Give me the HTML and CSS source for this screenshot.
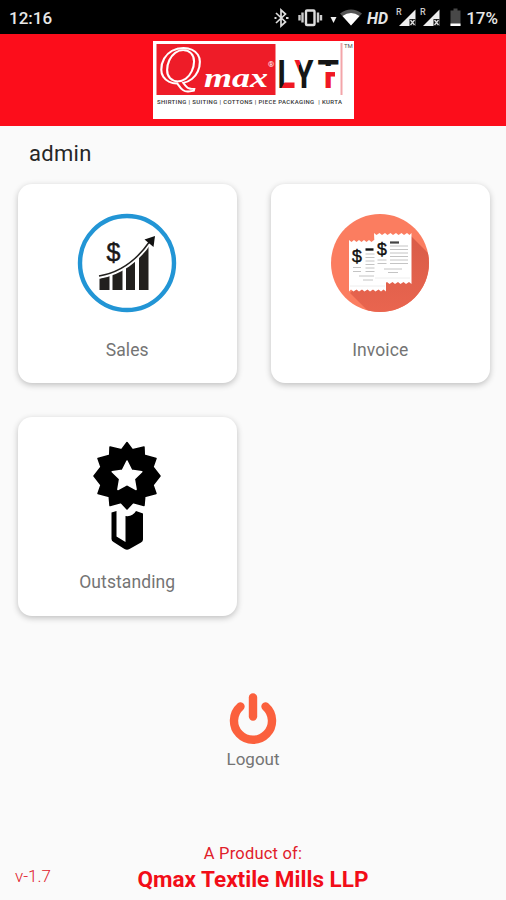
FILE: index.html
```html
<!DOCTYPE html>
<html lang="en">
  <head>
    <meta charset="UTF-8" />
    <meta name="viewport" content="width=device-width, initial-scale=1.0" />
    <title>Qmax LYF</title>
    <link rel="stylesheet" href="styles.css">
  </head>

  <body>
    <div class="app">
      <div class="status-bar">
        <span class="clock">12:16</span>
        <svg class="status-icons" width="194" height="34" viewBox="272 0 194 34">
          <!-- bluetooth -->
          <path d="M276 13l9.500 9-4.500 4V10l4.500 4-9.500 9" fill="none" stroke="#ddd" stroke-width="1.700" />
          <path d="M274.500 18h2M286 18h2.500" stroke="#ddd" stroke-width="2" />
          <!-- vibrate -->
          <rect x="306" y="10.500" width="8.500" height="14.500" rx="1" fill="none" stroke="#ddd" stroke-width="2.400" />
          <path d="M302.500 12.500v10M318 12.500v10M299.500 15v5.500M321 15v5.500" stroke="#ccc" stroke-width="2.400" />
          <!-- wifi -->
          <path d="M330.500 17h6l-3 6z" fill="#eee" />
          <path d="M340 13.500q11-8 22 0L351 25.500z" fill="#555" />
          <path d="M342.500 16q8.500-6 17 0L351 25.500z" fill="#fff" />
          <text class="hd" x="367" y="23.500" textLength="21">HD</text>
          <!-- signals -->
          <text class="roaming" x="396" y="15">R</text>
          <path d="M399 26L415.500 9.500V26z" fill="#eee" />
          <path d="M409.500 26v-7h6v7z" fill="#111" />
          <path d="M410.500 20l4 5M414.500 20l-4 5" stroke="#ddd" stroke-width="1.300" />
          <text class="roaming" x="420" y="15">R</text>
          <path d="M423 26L439.500 9.500V26z" fill="#eee" />
          <path d="M433.500 26v-7h6v7z" fill="#111" />
          <path d="M434.500 20l4 5M438.500 20l-4 5" stroke="#ddd" stroke-width="1.300" />
          <!-- battery -->
          <path d="M450.500 10.500h3V8.500h4v2h3V26h-10z" fill="#484848" />
          <path d="M450.500 23.500h10V26h-10z" fill="#fff" />
        </svg>
        <span class="battery">17%</span>
      </div>

      <header class="header">
        <svg width="201" height="85" viewBox="0 -7 201 85">
          <defs>
            <linearGradient id="y-fill" x1="0" y1="0" x2="1" y2="0.500">
              <stop offset="0.320" stop-color="#f01824" />
              <stop offset="0.320" stop-color="#151515" />
            </linearGradient>
            <linearGradient id="t-fill" x1="0" y1="0" x2="0" y2="1">
              <stop offset="0.310" stop-color="#151515" />
              <stop offset="0.310" stop-color="#fff" />
              <stop offset="0.450" stop-color="#fff" />
              <stop offset="0.450" stop-color="#f01824" />
            </linearGradient>
          </defs>
          <rect width="201" height="78" fill="#fff" />
          <rect x="3.500" y="3" width="119" height="51" fill="#ee1c28" />
          <text class="logo-q" x="5" y="41.500" textLength="43" lengthAdjust="spacingAndGlyphs">Q</text>
          <text class="logo-max" x="51" y="46" textLength="64" lengthAdjust="spacingAndGlyphs">max</text>
          <text class="logo-reg" x="115" y="26">®</text>
          <g class="logo-lyf">
            <text x="124.500" y="46.500" textLength="16.500" lengthAdjust="spacingAndGlyphs" fill="#151515">L</text>
            <path d="M131.500 41.500h10v5.500h-13z" fill="#f01824" />
            <text x="141.500" y="46.500" textLength="19" lengthAdjust="spacingAndGlyphs" fill="url(#y-fill)">Y</text>
            <text x="164.500" y="46.500" textLength="21.500" lengthAdjust="spacingAndGlyphs" fill="url(#t-fill)">T</text>
          </g>
          <path d="M177 33.300h5" stroke="#f01824" stroke-width="4.500" />
          <path d="M188.500 2v52" stroke="#f3a5a9" stroke-width="2" />
          <text class="logo-tm" x="191" y="7">TM</text>
          <text class="tagline" x="4" y="62.500" textLength="185">SHIRTING | SUITING | COTTONS | PIECE PACKAGING &#160;| KURTA</text>
        </svg>
      </header>

      <p class="user">admin</p>

      <main class="grid">
        <div class="card">
          <svg width="100" height="100" viewBox="0 0 100 100">
            <circle cx="50" cy="50" r="47" fill="#fff" stroke="#2295d5" stroke-width="4.400" />
            <text class="dollar" x="36.500" y="48">$</text>
            <path d="M22.500 65.500l10-3V77h-10zM35.500 61l10-5.500V77h-10zM49 54l9-7.500V77h-9zM62 43l9.500-11V77H62z" fill="#22201e" />
            <path d="M22 63.500C43 60 61 47 73 28" fill="none" stroke="#fff" stroke-width="4.500" />
            <path d="M22 63C43 59.500 60 47 73 28" fill="none" stroke="#22201e" stroke-width="1.500" />
            <path d="M67.500 26.500L78 23l-1.500 11z" fill="#111" />
          </svg>
          <span>Sales</span>
        </div>

        <div class="card">
          <svg width="100" height="100" viewBox="0 0 100 100">
            <defs>
              <clipPath id="round"><circle cx="50" cy="50" r="49" /></clipPath>
              <linearGradient id="shade" x1="0" y1="0" x2="0" y2="1">
                <stop offset="0" stop-color="#d95c48" />
                <stop offset="1" stop-color="#eb6650" />
              </linearGradient>
            </defs>
            <circle cx="50" cy="50" r="49" fill="#fb7d60" />
            <path d="M81 23l30 30v57H50L20 80z" fill="url(#shade)" clip-path="url(#round)" />
            <path d="M19 27l2.500 2 2.500-2 2.500 2 2.500-2 2.500 2 2.500-2 2.500 2 2.500-2 2.500 2 2.500-2H56v51.500l-2.500-2-2.500 2-2.500-2-3 2-2.500-2-3 2-2.500-2-3 2-2.500-2-3 2-2.500-2-3 2-2.500-2-2 2z" fill="#fff" />
            <path d="M44 20l2.500 2 3-2 2.500 2 3-2 2.500 2 3-2 2.500 2 3-2 2.500 2 3-2 2.500 2 3-2 2.500 2 2-2v51l-2.500-2-3 2-2.500-2-3 2-2.500-2-3 2-2.500-2-3 2-2.500-2-3 2-2.500-2-3 2-2.500-2z" fill="#fff" />
            <text class="bill-dollar" x="21.500" y="49">$</text>
            <text class="bill-dollar" x="46.500" y="41.500">$</text>
            <path d="M35.500 36.500h8" stroke="#111" stroke-width="2.400" />
            <path d="M60 29.500h9" stroke="#444" stroke-width="2.200" />
            <path d="M60 33h18M60 36.500h18M60 40h18M60 43.500h18M60 47h18M60 50.500h18M47.500 47h9M47.500 50.500h9M54 56h18M58 59.500h10M35.500 41h9M35.500 44.500h9M35.500 48h9M35.500 51.500h9M35.500 55h9M35.500 58.500h9M23 54.500h8M23 58.500h8M29 63h15M33 67h10" stroke="#c4c4c4" stroke-width="1" />
            <path d="M45 65h35M20 73h35" stroke="#eee" stroke-width="1" />
          </svg>
          <span>Invoice</span>
        </div>

        <div class="card">
          <svg class="badge" width="72" height="112" viewBox="0 0 72 112">
            <path d="M36 3.500L41.400 10.700L53 8L53.300 16.200L65 19.500L62 28L69 37L62 46L65 54.500L53.800 57.500L53 66.500L42 63.500L36 70L30 63.500L19 66.500L18.200 57.500L7 54.500L10 46L3 37L10 28L7 19.500L18.700 16.200L19 8L30.600 10.700z" fill="#000" stroke="#000" stroke-width="1.500" stroke-linejoin="round" />
            <path d="M36 22l4.500 9.200 10.300 1.500-7.500 7.200 1.800 10.600-9.100-4.800-9.100 4.800 1.800-10.600-7.500-7.200 10.300-1.500z" fill="#fff" stroke="#fff" stroke-width="1.500" stroke-linejoin="round" />
            <path d="M20.500 73.500l5-1.500v25.500l9 5.500V77q7 1 10.500-5l7 2.500v26q0 2-2 3l-11.500 6.500q-2.500 1.500-5 0L22.500 103q-2-1-2-3z" fill="#000" />
          </svg>
          <span>Outstanding</span>
        </div>
      </main>

      <div class="logout">
        <svg width="52" height="54" viewBox="0 0 52 54">
          <path d="M13.500 15.500A19 19 0 1 0 38.500 15.500" fill="none" stroke="#fb603d" stroke-width="8.400" stroke-linecap="round" />
          <path d="M26 6.500v19" stroke="#fb603d" stroke-width="8.400" stroke-linecap="round" />
        </svg>
        <span>Logout</span>
      </div>

      <footer class="footer">
        <span class="version">v-1.7</span>
        <div class="product">
          <p>A Product of:</p>
          <strong>Qmax Textile Mills LLP</strong>
        </div>
      </footer>
    </div>
  </body>
</html>
```
FILE: styles.css
```css
* {
  box-sizing: border-box;
  margin: 0;
  padding: 0;
}

body {
  font-family: Roboto, sans-serif;
  background: #fafafa;
  color: #747474;
}

.app {
  height: 900px;
  display: flex;
  flex-direction: column;
  overflow: hidden;
}

svg {
  display: block;
}

.status-bar {
  height: 34px;
  background: #000;
  color: #e8e8e8;
  display: flex;
  align-items: center;
  padding: 2px 8px 0 9px;
  font-size: 17px;
  font-weight: 500;
}

.status-icons {
  margin: -2px 0 0 auto;
}

.hd {
  font-size: 16px;
  font-weight: 700;
  font-style: italic;
  fill: #e4e4e4;
}

.roaming {
  font-size: 9px;
  fill: #ccc;
}

.header {
  height: 91.5px;
  background: #fc0d1b;
  display: flex;
  justify-content: center;
}

.logo-q {
  font-family: "Liberation Serif", serif;
  font-style: italic;
  font-size: 53px;
  fill: #ee1c28;
  stroke: #fff;
  stroke-width: 1.8;
}

.logo-max {
  font-family: "Liberation Serif", serif;
  font-style: italic;
  font-weight: 700;
  font-size: 27px;
  fill: #fff;
}

.logo-reg {
  font-size: 8px;
  fill: #fff;
}

.logo-lyf {
  font-family: Roboto, sans-serif;
  font-weight: 700;
  font-size: 39px;
}

.logo-tm {
  font-size: 6px;
  fill: #555;
}

.tagline {
  font-size: 6px;
  font-weight: 500;
  fill: #333;
}

.user {
  height: 58.5px;
  padding: 14px 29px 0;
  font-size: 22px;
  line-height: 28px;
  letter-spacing: 0.3px;
  color: #262626;
}

.grid {
  display: grid;
  grid-template-columns: 219.5px 219.5px;
  grid-auto-rows: 199px;
  gap: 33.5px;
  padding-left: 17.5px;
}

.card {
  background: #fff;
  border-radius: 14px;
  box-shadow: 0 2px 6px rgba(0, 0, 0, 0.24);
  display: flex;
  flex-direction: column;
  align-items: center;
  justify-content: space-between;
  padding: 29px 0 21.5px;
  font-size: 17.5px;
  line-height: 24px;
  letter-spacing: 0.1px;
}

.badge {
  margin-top: -7px;
}

.dollar {
  font-family: "Liberation Sans", sans-serif;
  font-size: 25px;
  text-anchor: middle;
  fill: #181818;
  stroke: #181818;
  stroke-width: 0.5;
}

.bill-dollar {
  font-family: "Liberation Mono", monospace;
  font-size: 18px;
  fill: #111;
  stroke: #111;
  stroke-width: 0.4;
}

.logout {
  margin-top: 75px;
  display: flex;
  flex-direction: column;
  align-items: center;
  gap: 2px;
  font-size: 17px;
  line-height: 24px;
}

.footer {
  margin-top: auto;
  display: grid;
  grid-template-columns: 1fr auto 1fr;
  padding: 0 15px 7px;
  color: #e0202a;
}

.version {
  align-self: end;
  font-size: 17px;
  font-weight: 300;
  line-height: 34px;
}

.product {
  text-align: center;
}

.product p {
  font-size: 16.5px;
  line-height: 22px;
  letter-spacing: 0.2px;
}

.product strong {
  display: block;
  font-size: 22.5px;
  font-weight: 700;
  line-height: 28px;
  color: #f20d18;
}
```
